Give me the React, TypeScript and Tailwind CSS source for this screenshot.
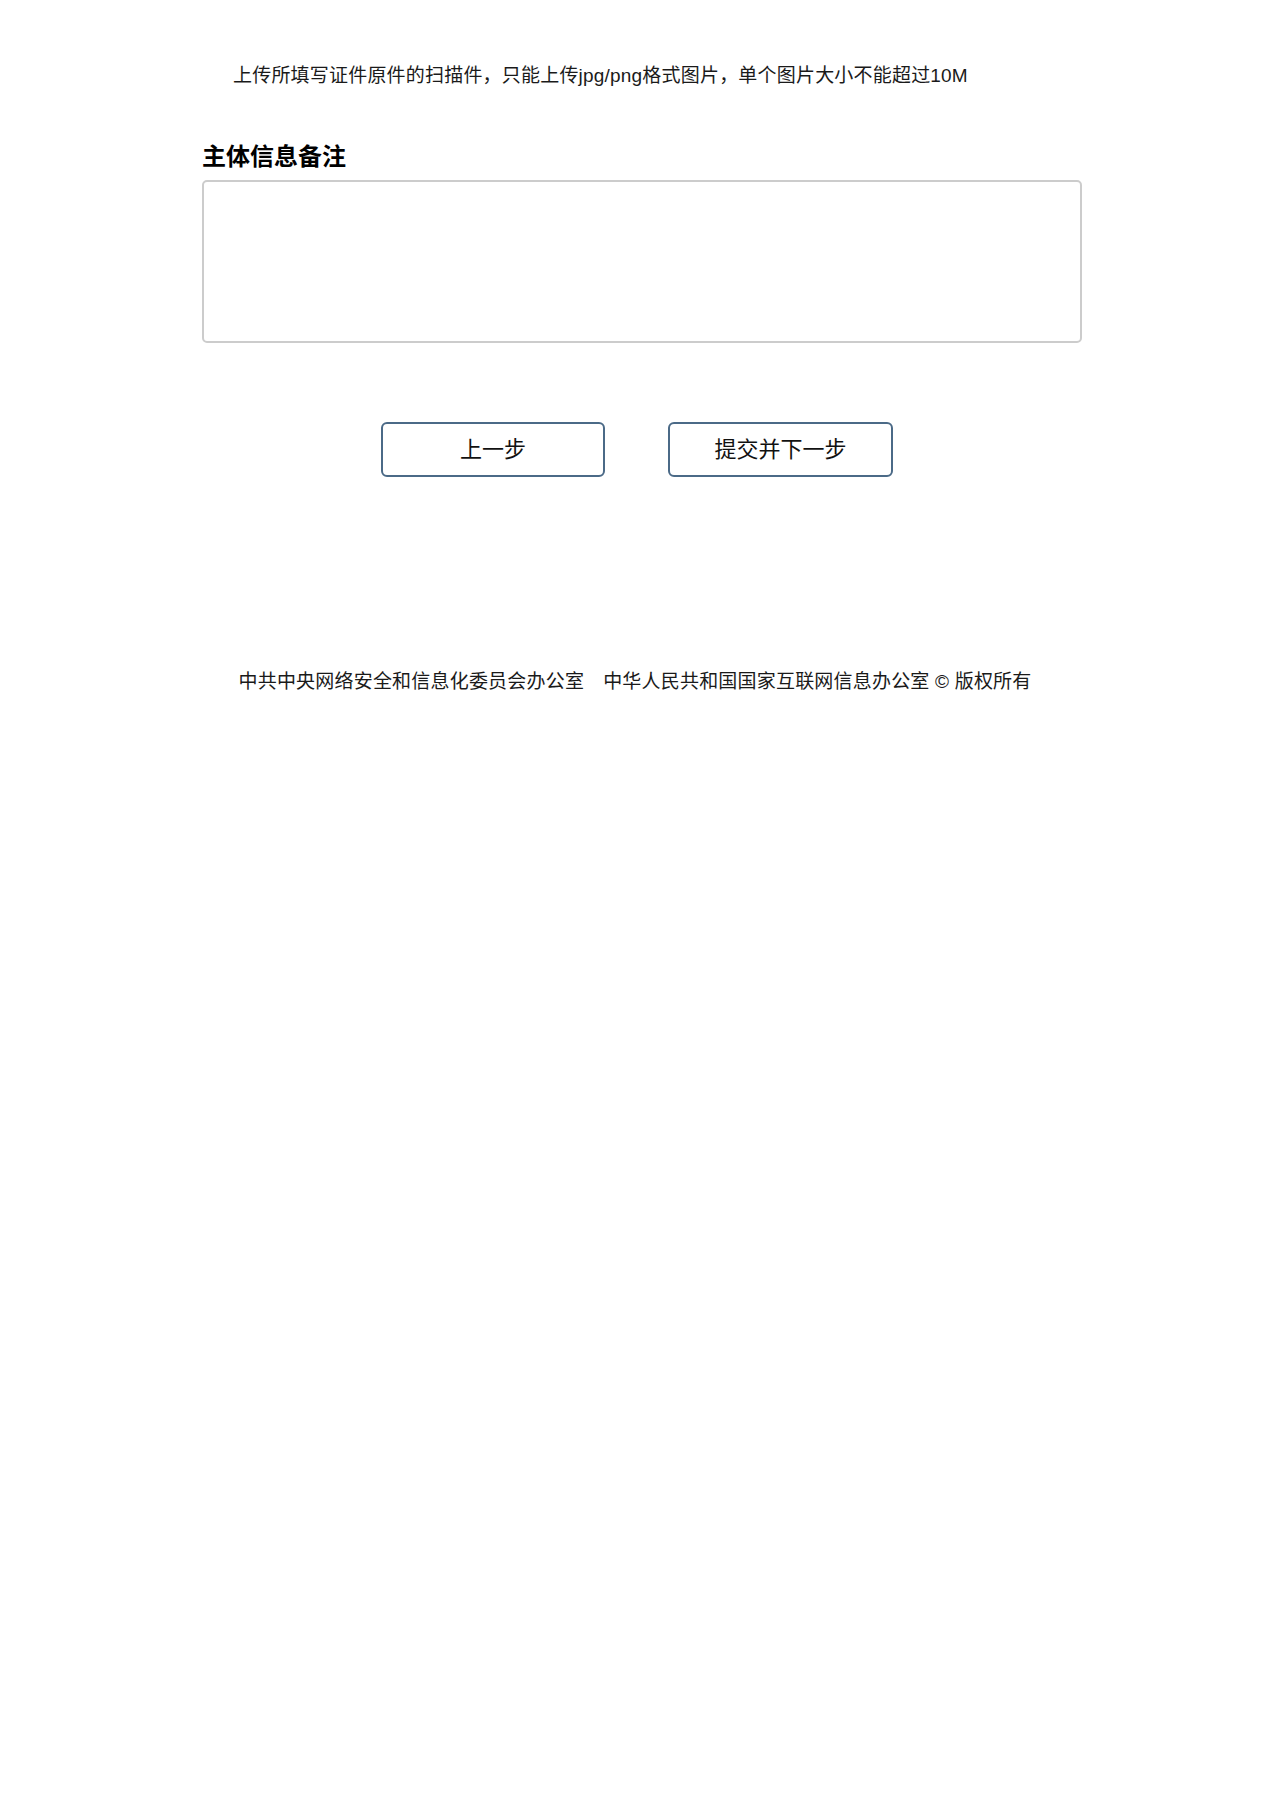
export default function App() {
  return (
    <div className="min-h-[1796px] w-full bg-white text-[#1a1a1a] [font-family:'Liberation_Sans','Noto_Sans_CJK_SC',sans-serif]">
      <div className="ml-[202px] w-[880px] pt-[62px]">
        <p className="pl-[31px] text-[19px] leading-[28px] tracking-[0.2px]">
          上传所填写证件原件的扫描件，只能上传jpg/png格式图片，单个图片大小不能超过10M
        </p>

        <h3 className="mt-[51px] text-[24px] font-bold leading-[32px] text-black">主体信息备注</h3>
        <textarea className="mt-[7px] block h-[163px] w-[880px] resize-none rounded-[5px] border-2 border-[#cccccc] bg-white outline-none" />

        <div className="mt-[79px] flex gap-[63px] pl-[179px]">
          <button className="h-[55px] w-[224px] rounded-[6px] border-2 border-[#4b6a87] bg-white text-[22px] text-[#111]">
            上一步
          </button>
          <button className="h-[55px] w-[225px] rounded-[6px] border-2 border-[#4b6a87] bg-white text-[22px] text-[#111]">
            提交并下一步
          </button>
        </div>
      </div>

      <footer className="mt-[191px] text-center text-[19px] leading-[28px] tracking-[0.2px]">
        中共中央网络安全和信息化委员会办公室
        <span className="inline-block w-[19px]" />
        中华人民共和国国家互联网信息办公室 © 版权所有
      </footer>
    </div>
  );
}
